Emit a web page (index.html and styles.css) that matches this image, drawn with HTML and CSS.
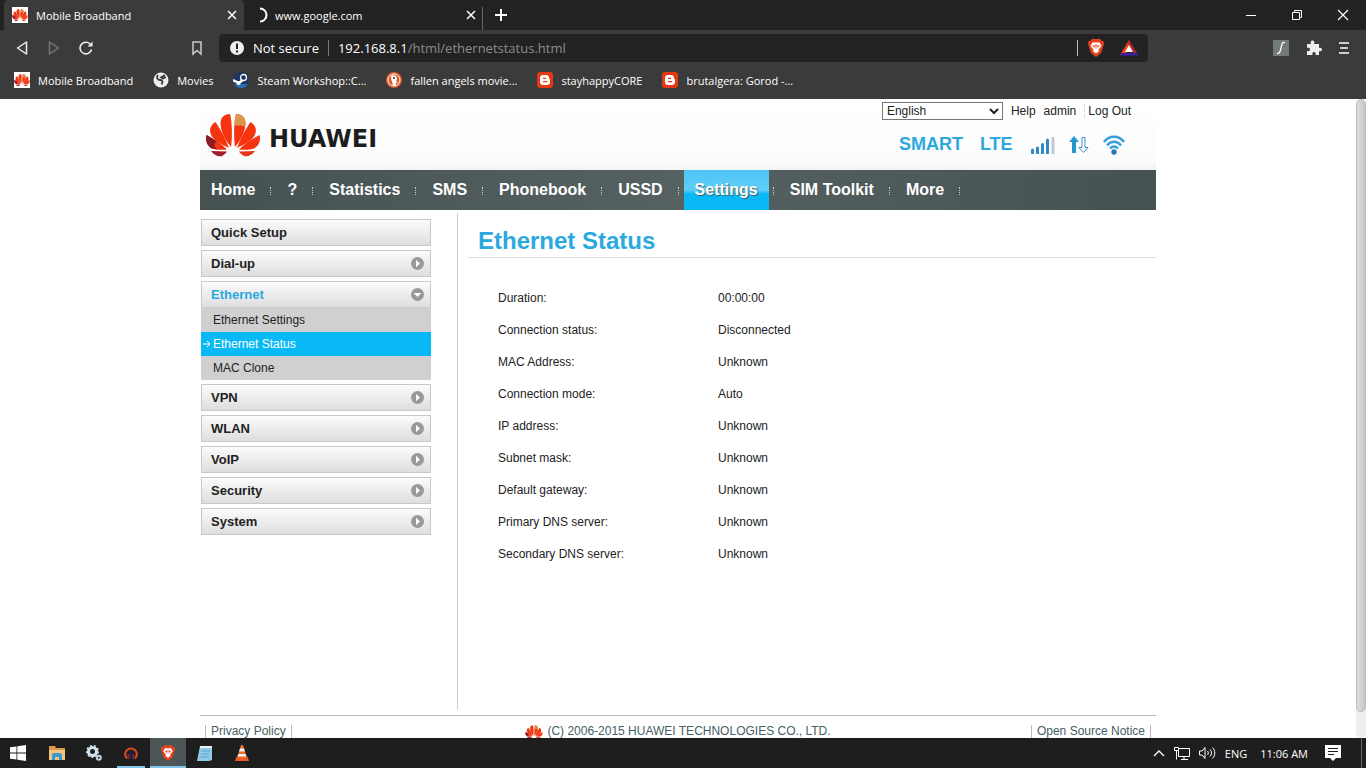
FILE: index.html
```
<!DOCTYPE html>
<html lang="en">
<head>
    <meta charset="UTF-8">
    <meta name="viewport" content="width=device-width, initial-scale=1.0">
    <title>Mobile Broadband</title>
    <link rel="stylesheet" href="styles.css">
</head>
<body>

    <!-- shared icons -->
    <svg class="defs" aria-hidden="true">
        <symbol id="flower" viewBox="0 0 56 44">
            <path fill="#f4330f" d="M26 34C27.500 24 27 8 25 1 20 1 15.500 4 15.500 10 15.500 18 20 27 26 34z"/>
            <path fill="#f4330f" d="M24 35C20 24 14 14 10.500 9 5 12 3.500 18 7 23.500 11 29 18 32 24 35z"/>
            <path fill="#f4330f" d="M22 36.500C16 30 8 25.500 1.500 22 0 27 2 33 7 35.500 11 37 17 37 22 36.500z"/>
            <path fill="#8e1a2a" d="M12 28.500C8 25.500 5 24 1.500 22 0 27 2 33 7 35.500 9 36.300 11 36.700 12 36.700 9 33 8 30 12 28.500z"/>
            <path fill="#a31d26" d="M22 38.500L6 38C9 42 13 44 17 43 19 42 21 40 22 38.500z"/>
            <path fill="#f4330f" d="M30 34C28.500 24 29 8 31 1 36 1 40.500 4 40.500 10 40.500 18 36 27 30 34z"/>
            <path fill="#d9974c" d="M31 1C36 1 40.500 4 40.500 10 40.500 12 40 13 39.700 14 36 11 32 14 29.500 12 29.700 8 30.200 4 31 1z"/>
            <path fill="#f4330f" d="M32 35C36 24 42 14 45.500 9 51 12 52.500 18 49 23.500 45 29 38 32 32 35z"/>
            <path fill="#f4330f" d="M34 36.500C40 30 48 25.500 54.500 22 56 27 54 33 49 35.500 45 37 39 37 34 36.500z"/>
            <path fill="#e83417" d="M34 38.500L50 38C47 42 43 44 39 43 37 42 35 40 34 38.500z"/>
        </symbol>
        <symbol id="brave" viewBox="0 0 16 18">
            <path fill="#e5431f" d="M4 0h8l2 2h1.500L16 5l-1 3-2 6-5 4-5-4-2-6-1-3L.500 2H2z"/>
            <path fill="#fff" d="M4.500 3.500h7L13.500 7l-3 3.500 .500 1.500L8 14.500 5 12l.5-1.500L2.500 7z"/>
            <path fill="#e5431f" d="M4 6l3 .8L6.500 9zM12 6l-3 .8.500 2.200zM7.300 5h1.400L8 11z"/>
        </symbol>
        <symbol id="blogger" viewBox="0 0 16 16">
            <rect width="16" height="16" rx="3" fill="#e33a14"/>
            <path fill="#fff" fill-rule="evenodd" d="M6 3h3c2 0 3 1 3 3 0 1 1 .5 1 2v2c0 2-1 3-3 3H6c-2 0-3-1-3-3V6c0-2 1-3 3-3zM6 5.700h3v1.300H6zM6 9h4.200v1.300H6z"/>
        </symbol>
        <symbol id="close" viewBox="0 0 10 10">
            <path d="M1 1l8 8M9 1l-8 8" stroke="#fff" stroke-width="1.500" fill="none"/>
        </symbol>
        <symbol id="arrow-right" viewBox="0 0 13 13">
            <circle cx="6.500" cy="6.500" r="6.500" fill="#999"/>
            <path d="M5 2.800L9 6.500 5 10.200z" fill="#fff"/>
        </symbol>
        <symbol id="arrow-down" viewBox="0 0 13 13">
            <circle cx="6.500" cy="6.500" r="6.500" fill="#999"/>
            <path d="M2.800 5h7.400L6.500 9z" fill="#fff"/>
        </symbol>
    </svg>

    <!-- browser -->
    <header class="browser">
        <div class="tabs">
            <div class="tab active">
                <svg class="favicon"><use href="#flower"/></svg>
                <span>Mobile Broadband</span>
                <button type="button" aria-label="Close tab"><svg width="10" height="10"><use href="#close"/></svg></button>
            </div>
            <div class="tab">
                <svg class="loader" viewBox="0 0 16 16"><path d="M4 1.500a6.500 6.500 0 0 1 0 13" fill="none" stroke="#fff" stroke-width="2"/></svg>
                <span>www.google.com</span>
                <button type="button" aria-label="Close tab"><svg width="10" height="10"><use href="#close"/></svg></button>
            </div>
            <button type="button" class="new-tab" aria-label="New tab"><svg width="12" height="12" viewBox="0 0 12 12"><path d="M6 0v12M0 6h12" stroke="#fff" stroke-width="2"/></svg></button>
            <div class="window-buttons">
                <button type="button" aria-label="Minimize"><svg width="12" height="12" viewBox="0 0 12 12"><path d="M1 6.500h10" stroke="#fff"/></svg></button>
                <button type="button" aria-label="Restore"><svg width="12" height="12" viewBox="0 0 12 12"><path d="M1.500 3.500h7v7h-7zM3.500 3.500v-2h7v7h-2" stroke="#fff" fill="none"/></svg></button>
                <button type="button" aria-label="Close"><svg width="12" height="12" viewBox="0 0 12 12"><path d="M1 1l10 10M11 1L1 11" stroke="#fff" stroke-width="1.200"/></svg></button>
            </div>
        </div>

        <div class="toolbar">
            <div class="history">
                <button type="button" aria-label="Back"><svg width="14" height="16" viewBox="0 0 14 16"><path d="M11.500 2v12L2.500 8z" fill="none" stroke="#eee" stroke-width="1.500" stroke-linejoin="round"/></svg></button>
                <button type="button" aria-label="Forward"><svg width="14" height="16" viewBox="0 0 14 16"><path d="M2.500 2v12L11.500 8z" fill="none" stroke="#777" stroke-width="1.500" stroke-linejoin="round"/></svg></button>
                <button type="button" aria-label="Reload"><svg width="14" height="16" viewBox="0 0 14 16"><path d="M12.500 9.500A5.800 5.800 0 1 1 11 4" fill="none" stroke="#eee" stroke-width="1.600"/><path d="M13.500 1.500v5h-5z" fill="#eee"/></svg></button>
            </div>
            <button type="button" class="bookmark" aria-label="Bookmark"><svg width="12" height="16" viewBox="0 0 12 16"><path d="M2 2h8v12l-4-3.500L2 14z" fill="none" stroke="#ccc" stroke-width="1.500"/></svg></button>
            <div class="address">
                <svg width="14" height="14" viewBox="0 0 14 14"><circle cx="7" cy="7" r="7" fill="#eee"/><path d="M7 2.500v5.500M7 9.500v2" stroke="#222" stroke-width="2"/></svg>
                <span class="secure">Not secure</span>
                <span class="url">192.168.8.1<span>/html/ethernetstatus.html</span></span>
                <div class="shields">
                    <svg width="16" height="18"><use href="#brave"/></svg>
                    <svg width="18" height="16" viewBox="0 0 18 16"><path d="M9 0L0 15h5l4-6z" fill="#f0401c"/><path d="M9 0l9 15h-3L8 4z" fill="#b8282a"/><path d="M1 13h16l1 2.500H0z" fill="#3a1ea8"/><path d="M9 5l4 7H5z" fill="#fff"/></svg>
                </div>
            </div>
            <div class="extensions">
                <button type="button" aria-label="Extension"><svg width="16" height="16" viewBox="0 0 16 16"><rect width="16" height="16" fill="#737a78"/><path d="M12 2.500c-3-1-3 2-4 5.500s-1 6-4 5.500" fill="none" stroke="#fff" stroke-width="1.300"/></svg></button>
                <button type="button" aria-label="Extensions"><svg width="16" height="16" viewBox="0 0 16 16"><path fill="#eee" d="M1 4h4c-1-2 0-3.500 1.500-3.500S9 2 8 4h5v4c2-.700 3 .2 3 1.500S15 11.700 13 11v4H9.500c.7-2-.2-3-1.500-3s-2 1-1.500 3H1v-4c2 .5 3-.3 3-1.500S3 7.500 1 8z"/></svg></button>
                <button type="button" aria-label="Menu"><svg width="10" height="14" viewBox="0 0 10 14"><path d="M0 2h10M1 7h8M0 12h10" stroke="#ccc" stroke-width="2"/></svg></button>
            </div>
        </div>

        <nav class="bookmarks">
            <a href="#"><svg class="favicon"><use href="#flower"/></svg>Mobile Broadband</a>
            <a href="#"><svg width="16" height="16" viewBox="0 0 16 16"><circle cx="8" cy="8" r="7.500" fill="#eee"/><path d="M5 3C3 5 4 8 7 8s3 2 1.500 4.500M8 5.500l3-2 1 2-2 1z" stroke="#3b3b3b" stroke-width="1.800" fill="none"/></svg>Movies</a>
            <a href="#"><svg width="16" height="16" viewBox="0 0 16 16"><circle cx="8" cy="8" r="8" fill="#1c3562"/><path d="M1 12a8 8 0 0 0 14 0z" fill="#286fb5"/><path d="M0 8l6 3 5-4" stroke="#fff" stroke-width="2.500" fill="none"/><circle cx="10.500" cy="5.500" r="3" fill="#1c3562" stroke="#fff" stroke-width="1.300"/><circle cx="5.500" cy="11" r="2" fill="#fff"/></svg>Steam Workshop::C...</a>
            <a href="#"><svg width="16" height="16" viewBox="0 0 16 16"><circle cx="8" cy="8" r="8" fill="#e0592b"/><circle cx="8" cy="8" r="6" fill="none" stroke="#fff"/><path d="M5 4c3-2 6 0 6 3l-1 2 2 1-2 1v3H7c0-3-2-5-2-10z" fill="#fff"/><circle cx="8" cy="6" r="1" fill="#334"/></svg>fallen angels movie...</a>
            <a href="#"><svg width="16" height="16"><use href="#blogger"/></svg>stayhappyCORE</a>
            <a href="#"><svg width="16" height="16"><use href="#blogger"/></svg>brutalgera: Gorod -...</a>
        </nav>
    </header>

    <!-- router page -->
    <div class="viewport">
        <div class="page">
            <div class="top">
                <a href="#" class="logo"><svg width="56" height="44"><use href="#flower"/></svg><span>HUAWEI</span></a>
                <div class="top-right">
                    <div class="user">
                        <select aria-label="Language">
                            <option>English</option>
                        </select>
                        <a href="#">Help</a>
                        <a href="#">admin</a>
                        <a href="#" class="logout">Log Out</a>
                    </div>
                    <div class="signal">
                        <span>SMART</span>
                        <span>LTE</span>
                        <svg width="25" height="18" viewBox="0 0 25 18"><path d="M2.500 17v-3M7.500 17v-5M12.500 17V8.500M17.500 17V4" stroke="#2d8ac4" stroke-width="3" stroke-linecap="round"/><path d="M23 18V1" stroke="#c4c8ca" stroke-width="3"/></svg>
                        <svg width="20" height="18" viewBox="0 0 20 18"><path d="M5 0l5 6H7v11H3V6H0z" fill="#2596cf"/><path d="M13 1.500h3v10h3l-4.500 5-4.500-5h3z" fill="#fff" stroke="#3b93c5"/></svg>
                        <svg width="22" height="20" viewBox="0 0 22 20"><path d="M1 7c5-7 15-7 20 0M4 10.500c4-5 10-5 14 0M7 13.500c2.500-2.700 5.500-2.700 8 0" fill="none" stroke="#37a0d8" stroke-width="2.400"/><circle cx="11" cy="17" r="2.700" fill="#2478ad"/></svg>
                    </div>
                </div>
            </div>

            <ul class="menu">
                <li><a href="#">Home</a></li>
                <li><a href="#">?</a></li>
                <li><a href="#">Statistics</a></li>
                <li><a href="#">SMS</a></li>
                <li><a href="#">Phonebook</a></li>
                <li><a href="#">USSD</a></li>
                <li><a href="#" class="current">Settings</a></li>
                <li><a href="#">SIM Toolkit</a></li>
                <li><a href="#">More</a></li>
            </ul>

            <div class="main">
                <div class="sidebar">
                    <a href="#" class="item">Quick Setup</a>
                    <a href="#" class="item">Dial-up <svg width="13" height="13"><use href="#arrow-right"/></svg></a>
                    <div class="group">
                        <a href="#" class="item open">Ethernet <svg width="13" height="13"><use href="#arrow-down"/></svg></a>
                        <a href="#" class="sub">Ethernet Settings</a>
                        <a href="#" class="sub selected"><svg width="8" height="8" viewBox="0 0 8 8"><path d="M0 4h7M4 1l3 3-3 3" fill="none" stroke="#fff"/></svg>Ethernet Status</a>
                        <a href="#" class="sub">MAC Clone</a>
                    </div>
                    <a href="#" class="item">VPN <svg width="13" height="13"><use href="#arrow-right"/></svg></a>
                    <a href="#" class="item">WLAN <svg width="13" height="13"><use href="#arrow-right"/></svg></a>
                    <a href="#" class="item">VoIP <svg width="13" height="13"><use href="#arrow-right"/></svg></a>
                    <a href="#" class="item">Security <svg width="13" height="13"><use href="#arrow-right"/></svg></a>
                    <a href="#" class="item">System <svg width="13" height="13"><use href="#arrow-right"/></svg></a>
                </div>

                <div class="content">
                    <h1>Ethernet Status</h1>
                    <table>
                        <tr><th scope="row">Duration:</th><td>00:00:00</td></tr>
                        <tr><th scope="row">Connection status:</th><td>Disconnected</td></tr>
                        <tr><th scope="row">MAC Address:</th><td>Unknown</td></tr>
                        <tr><th scope="row">Connection mode:</th><td>Auto</td></tr>
                        <tr><th scope="row">IP address:</th><td>Unknown</td></tr>
                        <tr><th scope="row">Subnet mask:</th><td>Unknown</td></tr>
                        <tr><th scope="row">Default gateway:</th><td>Unknown</td></tr>
                        <tr><th scope="row">Primary DNS server:</th><td>Unknown</td></tr>
                        <tr><th scope="row">Secondary DNS server:</th><td>Unknown</td></tr>
                    </table>
                </div>
            </div>

            <footer>
                <a href="#">Privacy Policy</a>
                <span><svg width="18" height="14"><use href="#flower"/></svg>(C) 2006-2015 HUAWEI TECHNOLOGIES CO., LTD.</span>
                <a href="#">Open Source Notice</a>
            </footer>
        </div>
        <div class="scrollbar"><div class="thumb"></div></div>
    </div>

    <!-- taskbar -->
    <div class="taskbar">
        <button type="button" class="start" aria-label="Start"><svg width="16" height="16" viewBox="0 0 16 16"><path fill="#fff" d="M0 2.300l6.500-.9v6.100H0zM7.300 1.300L16 0v7.500H7.300zM0 8.400h6.500v6.200L0 13.700zM7.300 8.400H16V16l-8.700-1.300z"/></svg></button>
        <button type="button" aria-label="File Explorer"><svg width="16" height="14" viewBox="0 0 16 14"><path d="M0 0h6l1 2h9v12H0z" fill="#d99b4e"/><path d="M0 4h16v10H0z" fill="#f3c47d"/><path d="M3 14V9c0-1 1-2 2-2h6c1 0 2 1 2 2v5h-3v-3H6v3z" fill="#369bd0"/></svg></button>
        <button type="button" aria-label="Settings"><svg width="16" height="16" viewBox="0 0 16 16"><circle cx="6.500" cy="6.500" r="4" fill="none" stroke="#cfe3ee" stroke-width="3"/><circle cx="6.500" cy="6.500" r="5.800" fill="none" stroke="#cfe3ee" stroke-width="1.500" stroke-dasharray="2 2"/><circle cx="12.800" cy="12.800" r="2" fill="none" stroke="#c5d2da" stroke-width="2"/></svg></button>
        <button type="button" class="running" aria-label="Headphones"><svg width="14" height="14" viewBox="0 0 14 14"><path d="M3 12.500A5.800 5.800 0 1 1 11 12.500" fill="none" stroke="#d94b26" stroke-width="2"/><path d="M4.500 8v5M9.500 8v5" stroke="#74302a" stroke-width="2"/><path d="M7 5v8" stroke="#27195c" stroke-width="2"/></svg></button>
        <button type="button" class="running focused" aria-label="Brave"><svg width="14" height="16"><use href="#brave"/></svg></button>
        <button type="button" aria-label="Notepad"><svg width="16" height="16" viewBox="0 0 16 16"><path d="M3 1h12v14l-3 1H0z" fill="#8fcbe6"/><path d="M3 1h12v2H3z" fill="#e8f3f8"/><path d="M4 6h9M4 9h8M3 12h9" stroke="#5ba6cb"/></svg></button>
        <button type="button" aria-label="VLC"><svg width="14" height="16" viewBox="0 0 14 16"><path d="M6 0h2l4 13H2z" fill="#ee6a2c"/><path d="M5 3.500h4l1 3H4zM3.200 9h7.600l.7 2.500h-9z" fill="#eee"/><path d="M1.500 11.500L0 16h14l-1.500-4.500-2 1.500h-7z" fill="#e85b23"/></svg></button>
        <div class="tray">
            <svg width="12" height="8" viewBox="0 0 12 8"><path d="M1 7l5-5 5 5" fill="none" stroke="#fff" stroke-width="1.300"/></svg>
            <svg width="16" height="14" viewBox="0 0 16 14"><path d="M5 2.500h10.500v8H4.500V5M7 13.500h7M10 10.500v3M.500 1.500h4v3h-4zM2.500 5v8.500" fill="none" stroke="#fff"/></svg>
            <svg width="17" height="14" viewBox="0 0 17 14"><path d="M.500 5v4H3l3 3.500v-11L3 5zM8.500 5c1 1 1 3 0 4M11 3.500c2 2 2 5 0 7M13.500 1.500c3 3 3 8 0 11" fill="none" stroke="#fff"/></svg>
            <span>ENG</span>
            <span class="clock">11:06 AM</span>
            <svg width="16" height="16" viewBox="0 0 16 16"><path d="M0 0h16v13h-5l-3 3-3-3H0z" fill="#fff"/><path d="M3 3.500h10M3 6.500h10M3 9.500h6" stroke="#1e1e1e"/></svg>
        </div>
    </div>

</body>
</html>
```

FILE: styles.css
```
* {
    box-sizing: border-box;
}

body {
    margin: 0;
    height: 100vh;
    display: flex;
    flex-direction: column;
    overflow: hidden;
    background-color: #fff;
    color: #222;
    font-family: "Liberation Sans", Arial, sans-serif;
    font-size: 12px;
}

a {
    color: inherit;
    text-decoration: none;
}

button {
    display: flex;
    align-items: center;
    justify-content: center;
    padding: 0;
    border: none;
    background: none;
    cursor: pointer;
}

svg {
    display: block;
    flex-shrink: 0;
}

.defs {
    position: absolute;
    width: 0;
    height: 0;
}

/* browser */
.browser {
    flex-shrink: 0;
    background-color: #3b3b3b;
    color: #fff;
    font-family: "Open Sans", "Noto Sans", sans-serif;
    font-size: 11px;
}

.favicon {
    width: 16px;
    height: 16px;
    background-color: #fff;
}

.tabs {
    display: flex;
    height: 30px;
    padding-left: 4px;
    background-color: #222;
}

.tab {
    display: flex;
    align-items: center;
    gap: 8px;
    width: 240px;
    padding: 0 7px 0 8px;
    border-radius: 4px 4px 0 0;
}

.tab.active {
    background-color: #3b3b3b;
}

.tab + .tab {
    width: 238px;
    gap: 3px;
    padding-left: 12px;
    padding-right: 6px;
}

.tab button {
    margin-left: auto;
}

.loader {
    width: 16px;
    height: 16px;
}

.new-tab {
    width: 36px;
    border-left: 1px solid #666;
    margin-top: 7px;
    padding-bottom: 7px;
}

.window-buttons {
    display: flex;
    margin-left: auto;
}

.window-buttons button {
    width: 46px;
}

.toolbar {
    display: flex;
    align-items: center;
    height: 36px;
    padding: 4px 17px 4px 15px;
}

.history {
    display: flex;
    gap: 18px;
}

.bookmark {
    margin: 0 16px 0 98px;
}

.address {
    flex: 1;
    display: flex;
    align-items: center;
    height: 28px;
    padding: 0 10px 0 11px;
    border-radius: 4px;
    background-color: #222;
    font-size: 13px;
}

.secure {
    margin: 0 9px;
    padding-right: 9px;
    border-right: 1px solid #777;
    line-height: 16px;
}

.url span {
    color: #8c8c8c;
}

.shields {
    display: flex;
    align-items: center;
    gap: 16px;
    margin-left: auto;
    padding-left: 10px;
    border-left: 1px solid #bbb;
    height: 16px;
}

.extensions {
    display: flex;
    gap: 17px;
    margin-left: 125px;
}

.bookmarks {
    display: flex;
    gap: 20px;
    height: 33px;
    padding: 0 14px 5px;
}

.bookmarks a {
    display: flex;
    align-items: center;
    gap: 8px;
}

/* router page */
.viewport {
    flex: 1;
    min-height: 0;
    display: flex;
    overflow: hidden;
}

.page {
    width: 956px;
    margin: 0 auto;
}

.top {
    display: flex;
    justify-content: space-between;
    height: 71px;
    background: linear-gradient(#fff, #fcfcfc 85%, #f3f3f3);
}

.logo {
    display: flex;
    align-items: center;
    gap: 8px;
    padding-left: 5px;
    color: #1d1d1d;
    font-family: "DejaVu Sans", sans-serif;
    font-size: 24px;
    font-weight: bold;
}

.logo span {
    padding-top: 8px;
}

.top-right {
    padding: 3px 25px 0 0;
}

.user {
    display: flex;
    align-items: center;
    gap: 8px;
    height: 18px;
}

.user select {
    width: 121px;
    height: 18px;
    padding: 0;
    border: 1px solid #767676;
    background-color: #fff;
    color: #222;
    font-family: inherit;
    font-size: 12px;
}

.logout {
    padding-left: 3px;
    border-left: 1px dotted #ccc;
}

.signal {
    display: flex;
    align-items: center;
    gap: 14px;
    margin-top: 14px;
    padding-left: 17px;
    color: #2ba9df;
    font-size: 18px;
    font-weight: bold;
}

.signal span {
    margin-right: 3px;
}

.menu {
    display: flex;
    height: 40px;
    margin: 0;
    padding: 0;
    list-style: none;
    background: linear-gradient(90deg, #465252, #566262 50%, #465252);
    color: #fff;
    font-size: 16px;
    font-weight: bold;
}

.menu li {
    display: flex;
    align-items: center;
}

.menu li::after {
    content: "";
    height: 8px;
    margin: 2px 5px 0 4px;
    border-left: 1px dotted #ccc;
}

.menu a {
    height: 40px;
    padding: 0 11px;
    line-height: 39px;
}

.menu .current {
    background: linear-gradient(#4fc4f5, #5fcdf8 50%, #08b9f6 60%);
    text-shadow: 1px 1px 1px #40606e;
}

.main {
    display: flex;
    padding-top: 3px;
}

.sidebar {
    display: flex;
    flex-direction: column;
    gap: 4px;
    width: 258px;
    height: 497px;
    padding: 6px 26px 0 1px;
    border-right: 1px solid #ccc;
}

.item {
    display: flex;
    align-items: center;
    justify-content: space-between;
    height: 27px;
    padding: 0 6px 0 9px;
    border: 1px solid #c8c8c8;
    background: linear-gradient(#fbfbfb, #dedede);
    font-size: 13px;
    font-weight: bold;
}

.item.open {
    border-bottom-color: #d0d0d0;
    color: #2ba9df;
}

.sub {
    display: flex;
    align-items: center;
    height: 24px;
    padding-left: 12px;
    background-color: #d0d0d0;
}

.sub.selected {
    gap: 2px;
    padding-left: 2px;
    background-color: #08b9f6;
    color: #fff;
}

.content {
    flex: 1;
    margin-left: 10px;
}

.content h1 {
    margin: 0 0 24px;
    padding: 10px 10px 0;
    height: 45px;
    border-bottom: 1px solid #ddd;
    color: #2ba9df;
    font-size: 24px;
    line-height: 36px;
}

.content table {
    margin-left: 30px;
    border-collapse: collapse;
}

.content th,
.content td {
    height: 32px;
    padding: 0;
    font-weight: normal;
    text-align: left;
}

.content th {
    width: 220px;
}

footer {
    display: grid;
    grid-template-columns: 1fr auto 1fr;
    margin-top: 5px;
    padding: 9px 5px 0;
    border-top: 1px solid #bbb;
    color: #456064;
    line-height: 13px;
}

footer a {
    justify-self: start;
    padding: 0 5px;
    border: 1px solid #bbb;
    border-width: 0 1px;
}

footer a:last-child {
    justify-self: end;
}

footer span {
    display: flex;
    gap: 4px;
}

.scrollbar {
    width: 10px;
    border-radius: 5px;
    background-color: #eee;
}

.thumb {
    height: 96%;
    border: 1px solid #bbb;
    border-radius: 5px;
    background: linear-gradient(90deg, #ddd, #c6c6c6);
}

/* taskbar */
.taskbar {
    flex-shrink: 0;
    display: flex;
    height: 30px;
    background-color: #1e1e1e;
    color: #fff;
    font-family: "Open Sans", "Noto Sans", sans-serif;
    font-size: 11px;
}

.taskbar button {
    width: 36px;
    margin-right: 1px;
}

.taskbar .start {
    margin-right: 3px;
}

.running {
    position: relative;
}

.running::after {
    content: "";
    position: absolute;
    left: 4px;
    right: 4px;
    bottom: 0;
    height: 2px;
    background-color: #83c5ed;
}

.focused {
    background-color: #4c5656;
}

.focused::after {
    left: 0;
    right: 0;
}

.tray {
    display: flex;
    align-items: center;
    gap: 9px;
    margin-left: auto;
    margin-right: 4px;
    padding-right: 20px;
    border-right: 1px solid #666;
}

.clock {
    margin: 0 8px 0 4px;
}
```
